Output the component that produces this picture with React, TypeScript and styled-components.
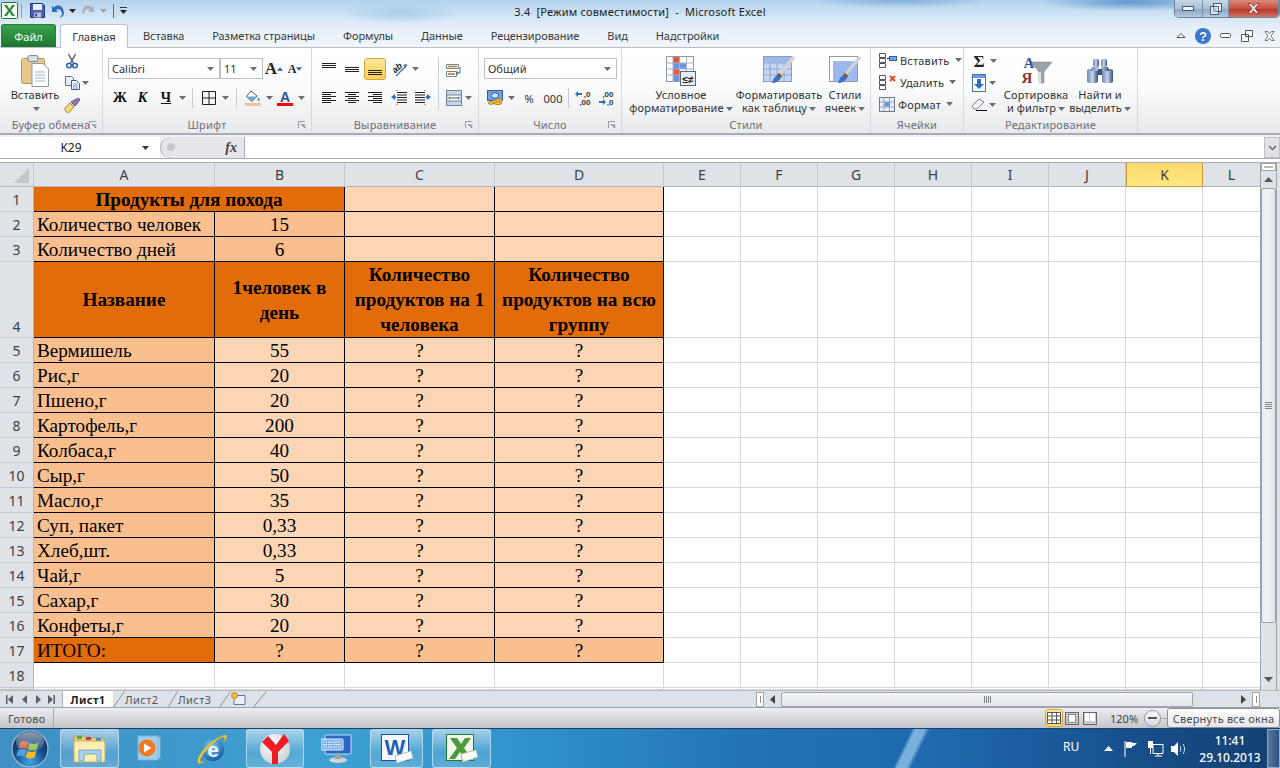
import React from "react";
import styled, { createGlobalStyle } from "styled-components";

const Global = createGlobalStyle`
  html, body { margin: 0; padding: 0; background: #fff; }
  #root { width: 1280px; height: 768px; overflow: hidden; }
  * { box-sizing: border-box; }
  svg { display: block; flex: none; }
`;

const UI = `"Noto Sans", "DejaVu Sans", sans-serif`;

const Screen = styled.div`
  width: 1280px; height: 768px; display: flex; flex-direction: column; overflow: hidden;
  font-family: ${UI}; font-size: 11px; color: #3b3b3b;
`;

const Chrome = styled.div`
  height: 47px; display: flex; flex-direction: column;
  background:
    radial-gradient(ellipse 60px 12px at 400px 12px, #a9cdea 0, transparent 100%),
    radial-gradient(ellipse 90px 9px at 1130px 2px, #5f98d0 0, transparent 100%),
    radial-gradient(ellipse 90px 8px at 900px 0, #7fb0dc 0, transparent 100%),
    linear-gradient(#b2d2ec 0, #cfe2f3 14px, #e6f0f9 28px, #f1f5fa 47px);
`;
const TitleBar = styled.div`
  height: 24px; display: grid; grid-template-columns: 1fr auto 1fr; align-items: start;
`;
const Qat = styled.div`display: flex; align-items: center; height: 21px; padding-left: 1px; gap: 0;`;
const Slot = styled.div<{ $w: number }>`
  width: ${p => p.$w}px; flex: none; display: flex; align-items: center; justify-content: center;
`;
const VRule = styled.div<{ $h: number; $c?: string; $mx?: number }>`
  width: 1px; height: ${p => p.$h}px; background: ${p => p.$c ?? "#c7ccd3"}; margin: 0 ${p => p.$mx ?? 0}px; flex: none;
`;
const TitleText = styled.div`
  font-size: 11px; line-height: 24px; color: #1e1e1e; white-space: pre; letter-spacing: .2px;
`;
const WinGroup = styled.div`display: flex; justify-content: flex-end;`;
const WinBtns = styled.div`
  width: 106px; height: 18px; display: flex; border: 1px solid #6f8296; border-top: none;
  border-radius: 0 0 5px 5px; overflow: hidden;
`;
const WinBtn = styled.div<{ $w: number; $close?: boolean }>`
  width: ${p => p.$w}px; display: flex; align-items: center; justify-content: center;
  border-right: 1px solid #7f93a8;
  background: ${p => p.$close ? "linear-gradient(#d98a7e,#c8503f 50%,#b8352a 55%,#d2756a)" : "linear-gradient(#c6d7e8,#a9c0d6 50%,#8da9c4 55%,#b3c9dc)"};
`;
const TabRow = styled.div`height: 23px; display: flex; align-items: stretch;`;
const FileTab = styled.div`
  width: 55px; margin-left: 1px; color: #fff; font-size: 11px; display: flex; align-items: center; justify-content: center;
  background: linear-gradient(#3aa24b,#2a8c3d 50%,#1e7430); border-radius: 3px 3px 0 0; border: 1px solid #2b7a3a; border-bottom: none;
`;
const ActiveTab = styled.div`
  width: 68px; margin-left: 4px; margin-right: 1px; height: 24px; display: flex; align-items: center; justify-content: center; font-size: 11px; color: #333;
  background: linear-gradient(#fff,#fbfcfd); border: 1px solid #bcc0c6; border-bottom: none; border-radius: 3px 3px 0 0; z-index: 1;
`;
const Tab = styled.div`
  padding: 0 14px; font-size: 11px; display: flex; align-items: center; color: #3a3a3a; white-space: nowrap; letter-spacing: -.07px;
`;
const TabRight = styled.div`margin-left: auto; display: flex; align-items: center;`;

const Ribbon = styled.div`
  height: 88px; display: flex; border-top: 1px solid #bcc0c6; border-bottom: 2px solid #a9adb3;
  background: linear-gradient(#fff 0, #fbfcfc 45%, #f1f2f4 72%, #e8eaed 100%);
`;
const Group = styled.div<{ $w: number }>`
  width: ${p => p.$w}px; flex: none; display: flex; flex-direction: column; position: relative;
  border-right: 1px solid #d6d9dd;
`;
const GroupBody = styled.div`flex: 1; display: flex; min-height: 0;`;
const GroupLabel = styled.div`
  height: 16px; line-height: 15px; text-align: center; color: #6d7076; font-size: 11px; flex: none; letter-spacing: .2px;
`;
const Launcher = styled.div`position: absolute; right: 5px; bottom: 4px;`;
const Col = styled.div<{ $pl?: number; $pt?: number; $gap?: number; $w?: number }>`
  display: flex; flex-direction: column; padding-left: ${p => p.$pl ?? 0}px; padding-top: ${p => p.$pt ?? 0}px; gap: ${p => p.$gap ?? 0}px;
  ${p => p.$w ? `width:${p.$w}px;flex:none;` : ""}
`;
const Row = styled.div<{ $h?: number }>`
  display: flex; align-items: center; ${p => p.$h ? `height:${p.$h}px;` : ""}
`;
const ComboBox = styled.div<{ $w: number }>`
  width: ${p => p.$w}px; height: 21px; border: 1px solid #bcc1c8; background: #fff; display: flex; align-items: center;
  justify-content: space-between; padding: 0 5px 0 3px; font-size: 11px; color: #333; flex: none;
`;
const BigBtn = styled.div<{ $w: number; $ml?: number }>`
  width: ${p => p.$w}px; margin-left: ${p => p.$ml ?? 0}px; flex: none; display: flex; flex-direction: column; align-items: center; padding-top: 6px;
`;
const BigIcon = styled.div`height: 34px; display: flex; align-items: center; justify-content: center;`;
const BigText = styled.div`
  font-size: 11px; line-height: 13px; text-align: center; color: #333; white-space: nowrap; letter-spacing: .1px;
`;
const GlyphBtn = styled.span`
  font-family: "Liberation Serif", serif; font-weight: 700; font-size: 14px; color: #111; line-height: 1;
`;
const Underlined = styled(GlyphBtn)`text-decoration: underline;`;
const ItalicGlyph = styled(GlyphBtn)`font-style: italic;`;
const GrowA = styled.span<{ $s: number }>`
  font-family: "Liberation Serif", serif; font-weight: 700; font-size: ${p => p.$s}px; color: #222; line-height: 1;
`;
const Selected = styled.div`
  width: 22px; height: 22px; display: flex; align-items: center; justify-content: center;
  border: 1px solid #d4a63f; border-radius: 3px; background: linear-gradient(#fde9a0,#fbd96c 55%,#fdd05a);
`;
const NumText = styled.span`font-size: 11px; color: #333;`;
const SmallCmd = styled.div`
  height: 22px; display: flex; align-items: center; font-size: 11px; color: #333; white-space: nowrap; letter-spacing: .2px;
`;
const CmdText = styled.span`margin: 0 5px 0 3px;`;

const FormulaRow = styled.div`
  height: 24px; display: flex; background: #eef0f3; padding-top: 2px; border-bottom: 1px solid #a9adb3;
`;
const NameBox = styled.div`
  width: 160px; flex: none; background: #fff; display: flex; align-items: center; font-size: 12px; color: #222; position: relative;
`;
const NameLabel = styled.span`width: 142px; text-align: center;`;
const FxPanel = styled.div`
  width: 85px; flex: none; background: #e4e6e9; display: flex; align-items: center; justify-content: flex-end; padding-right: 7px;
  border-right: 1px solid #a9adb3; border-left: 1px solid #a9adb3; border-radius: 12px 0 0 12px; position: relative;
`;
const FxDot = styled.div`
  position: absolute; left: 6px; top: 6px; width: 8px; height: 8px; border-radius: 50%; background: #c4c7cb;
`;
const FxText = styled.span`font-family: "Liberation Serif", serif; font-style: italic; font-weight: 700; font-size: 14px; color: #444;`;
const FormulaInput = styled.div`flex: 1; background: #fff;`;
const FormulaDrop = styled.div`
  width: 16px; flex: none; background: #e1e3e6; border: 1px solid #bcc0c5; display: flex; align-items: center; justify-content: center;
`;
const Gutter = styled.div`height: 4px; background: #fff; border-bottom: 1px solid #a9adb3; flex: none;`;

const SheetWrap = styled.div`height: 527px; display: flex; flex: none; background: #dfe3e8;`;

const COLS = [34, 181, 130, 150, 169, 77, 77, 77, 77, 77, 77, 77, 58];
const ROWS = [24, 25, 25, 25, 76, ...Array(14).fill(25), 2];

const SheetGrid = styled.div`
  width: 1260px; flex: none; height: 527px; overflow: hidden; display: grid; background: #fff;
  grid-template-columns: ${COLS.map(c => c + "px").join(" ")};
  grid-template-rows: ${ROWS.map(c => c + "px").join(" ")};
`;
const Corner = styled.div`
  background: #dfe3e8; border-right: 1px solid #c5c9cf; border-bottom: 1px solid #b4b8be; display: flex; align-items: flex-end; justify-content: flex-end; padding: 0 4px 3px 0;
`;
const ColHead = styled.div<{ $on?: boolean }>`
  background: ${p => p.$on ? "linear-gradient(#fdd96d,#fee97f)" : "#dfe3e8"};
  border-right: 1px solid ${p => p.$on ? "#c99a3a" : "#c5c9cf"};
  border-left: ${p => p.$on ? "1px solid #c99a3a" : "none"};
  border-bottom: 1px solid ${p => p.$on ? "#c99a3a" : "#b4b8be"};
  display: flex; align-items: center; justify-content: center; font-size: 14px; color: #3d4043;
`;
const RowHead = styled.div<{ $tall?: boolean }>`
  background: #dfe3e8; border-right: 1px solid #b4b8be; border-bottom: 1px solid #c5c9cf;
  display: flex; align-items: ${p => p.$tall ? "flex-end" : "center"}; justify-content: center; font-size: 14px; color: #3d4043;
  padding-bottom: ${p => p.$tall ? "1px" : "0"};
`;
const Cell = styled.div<{ $bg?: string; $center?: boolean; $bold?: boolean; $span?: number; $blank?: boolean }>`
  background: ${p => p.$bg ?? "#fff"};
  ${p => p.$span ? `grid-column: span ${p.$span};` : ""}
  border-right: 1px solid ${p => p.$blank ? "#d9d9d9" : "#000"};
  border-bottom: 1px solid ${p => p.$blank ? "#d9d9d9" : "#000"};
  font-family: "Liberation Serif", serif; font-size: 19.2px; color: #000; line-height: 25px;
  font-weight: ${p => p.$bold ? 700 : 400};
  text-align: ${p => p.$center ? "center" : "left"};
  padding-left: ${p => p.$center ? 0 : 3}px;
  white-space: nowrap; overflow: hidden;
`;
const HeadCell = styled(Cell)`display: flex; align-items: center; justify-content: center;`;

const VScroll = styled.div`
  width: 17px; flex: none; background: #dfe3e8; border-left: 1px solid #9ea3a9; border-right: 1px solid #9ea3a9; display: flex; flex-direction: column; align-items: center;
`;
const SplitV = styled.div`
  width: 15px; height: 8px; background: #fff; border: 1px solid #9ea3a9; display: flex; align-items: center; justify-content: center;
`;
const Arrow = styled.div<{ $h: number }>`
  height: ${p => p.$h}px; width: 100%; display: flex; align-items: center; justify-content: center; flex: none;
`;
const VThumb = styled.div`
  width: 15px; height: 435px; flex: none; border: 1px solid #9ea3a9; border-radius: 2px;
  background: linear-gradient(90deg,#e8ebf0,#f0f2f5 50%,#dfe2e8); display: flex; align-items: center; justify-content: center;
`;
const Grip = styled.div<{ $v?: boolean }>`
  width: 7px; height: 7px;
  background: ${p => p.$v
    ? "repeating-linear-gradient(#7f8388 0 1px,transparent 1px 2px)"
    : "repeating-linear-gradient(90deg,#7f8388 0 1px,transparent 1px 2px)"};
`;
const Flex1 = styled.div`flex: 1;`;

const TabsBar = styled.div`
  height: 17px; flex: none; display: flex; align-items: center; background: #dde1e8; border-top: 1px solid #b5b9c0;
`;
const SheetTabs = styled.div`width: 756px; flex: none; display: flex; align-items: center; height: 100%;`;
const SheetTab = styled.div<{ $on?: boolean; $w: number }>`
  width: ${p => p.$w}px; height: 16px; flex: none; display: flex; align-items: center; justify-content: ${p => p.$on ? "center" : "flex-start"};
  font-size: 11px; color: ${p => p.$on ? "#222" : "#555"}; font-weight: ${p => p.$on ? 700 : 400}; letter-spacing: .4px;
  background: ${p => p.$on ? "#fff" : "transparent"};
`;
const NavGap = styled.div`width: 3px; flex: none;`;
const SplitH = styled.div`
  width: 8px; height: 15px; background: #fff; border: 1px solid #9ea3a9; display: flex; align-items: center; justify-content: center; flex: none;
`;
const HBar = styled.div`width: 1px; height: 7px; background: #8d9197;`;
const HThumb = styled.div`
  width: 412px; height: 15px; flex: none; border: 1px solid #a4a8ae; border-radius: 2px;
  background: linear-gradient(#f2f4f7,#e3e6ec); display: flex; align-items: center; justify-content: center;
`;
const StatusBar = styled.div`
  height: 21px; flex: none; display: flex; align-items: center; border-top: 1px solid #9ea3a9;
  background: linear-gradient(#eceef1,#d8dade 50%,#c2c5ca);
`;
const Ready = styled.div`
  width: 54px; height: 100%; display: flex; align-items: center; padding-left: 8px; font-size: 11px; color: #4a4a4a; border-right: 1px solid #a8acb1; letter-spacing: .3px;
`;
const ViewBtn = styled.div<{ $on?: boolean }>`
  width: 18px; height: 18px; flex: none; display: flex; align-items: center; justify-content: center;
  ${p => p.$on ? "border:1px solid #d4a63f;border-radius:3px;background:linear-gradient(#fdeaa5,#fbd665);" : ""}
`;
const Zoom = styled.span`font-size: 11px; color: #444; width: 34px; text-align: left; margin-left: 11px; flex: none;`;
const ZoomMinus = styled.div`
  width: 17px; height: 17px; border-radius: 50%; flex: none; border: 1px solid #8f9399;
  background: linear-gradient(#fbfbfc,#d5d7da); display: flex; align-items: center; justify-content: center;
`;
const MinusBar = styled.div`width: 9px; height: 2px; background: #555;`;
const TipLine = styled.div`width: 6px; height: 1px; background: #aaa; flex: none;`;
const Tooltip = styled.div`
  width: 113px; height: 20px; flex: none; border: 1px solid #8b8f94; border-radius: 3px;
  background: linear-gradient(#fff,#e4e5ee); font-size: 11px; color: #4a4a4a; display: flex; align-items: center; justify-content: center; white-space: nowrap; letter-spacing: .2px;
`;

const Taskbar = styled.div`
  height: 40px; flex: none; display: flex; align-items: center; color: #fff; border-top: 1px solid #19406a;
  background:
    linear-gradient(116deg, transparent 0 70.2%, rgba(170,215,245,.65) 70.5% 71.2%, transparent 71.6%),
    linear-gradient(90deg,#3f8fc4 0,#3ea0d2 25%,#3194cb 40%,#2273b8 58%,#1e68ae 74%,#17508c 88%,#143f70 100%);
`;
const Orb = styled.div`width: 60px; height: 100%; flex: none; display: flex; align-items: center; justify-content: center;`;
const TaskBtn = styled.div<{ $w: number; $ml?: number; $open?: boolean }>`
  width: ${p => p.$w}px; height: 39px; margin-left: ${p => p.$ml ?? 0}px; flex: none; display: flex; align-items: center; justify-content: center;
  ${p => p.$open ? "border:1px solid rgba(190,225,245,.8);border-radius:3px;background:linear-gradient(rgba(255,255,255,.55),rgba(255,255,255,.12) 60%,rgba(255,255,255,.2));" : ""}
`;
const Tray = styled.div`margin-left: auto; display: flex; align-items: center; height: 100%;`;
const Lang = styled.span`font-size: 12px; width: 35px; margin-top: -4px;`;
const Clock = styled.div`
  width: 64px; text-align: center; font-size: 12px; line-height: 17px; margin-left: 8px; white-space: nowrap; font-weight: 500;
`;
const ShowDesk = styled.div`
  width: 13px; height: 100%; flex: none; margin-left: 5px; border: 1px solid rgba(170,200,230,.7); background: linear-gradient(90deg,rgba(255,255,255,.3),rgba(255,255,255,.1));
`;

/* ---- icons ---- */
const Caret = ({ c = "#6b6e73" }: { c?: string }) => (
  <svg width="7" height="4" viewBox="0 0 7 4"><path d="M0 0h7L3.5 4z" fill={c} /></svg>
);
const Launch = () => (
  <svg width="8" height="8" viewBox="0 0 8 8"><path d="M.5 7V.5H7" fill="none" stroke="#9a9da2" /><path d="M3 3h4.500v4.500z" fill="#b5b8bc" /><path d="M3 3l4 4" stroke="#777" /></svg>
);
const ExcelLogo = ({ s = 17 }: { s?: number }) => (
  <svg width={s} height={s} viewBox="0 0 17 17">
    <rect x=".5" y=".5" width="16" height="16" rx="1" fill="#f4f9f2" stroke="#1f7a3a" />
    <path d="M3 3h3l2.500 4L11 3h3l-4 5.500 4 5.500h-3l-2.500-4L6 14H3l4-5.500z" fill="#2f8a3d" />
  </svg>
);
const Save = () => (
  <svg width="15" height="15" viewBox="0 0 15 15">
    <path d="M.5.5h12l2 2v12H.5z" fill="#4a62b5" stroke="#27357e" />
    <rect x="3" y="1" width="9" height="6" fill="#e8edf8" />
    <rect x="4" y="9.500" width="7" height="5" fill="#b9c4e2" /><rect x="5" y="10.500" width="2" height="3" fill="#3a4e9a" />
  </svg>
);
const Undo = ({ c = "#2d6fb8" }: { c?: string }) => (
  <svg width="15" height="14" viewBox="0 0 15 14">
    <path d="M2 2v6h6L6 6c3-2 5.500-.5 6 4l2-1C13.500 2 8-1 4 3.500z" fill={c} />
    <path d="M12 10c-.5 1.500-1.500 3-3 3.500 3 0 5-2 5-4.500z" fill={c} />
  </svg>
);
const Redo = () => <svg width="15" height="14" viewBox="0 0 15 14"><g transform="translate(15 0) scale(-1 1)"><path d="M2 2v6h6L6 6c3-2 5.500-.5 6 4l2-1C13.500 2 8-1 4 3.500z" fill="#a9b3bc" /></g></svg>;
const Custom = () => (
  <svg width="9" height="8" viewBox="0 0 9 8"><path d="M1 .5h7" stroke="#333" /><path d="M1 3h7L4.500 7z" fill="#222" /></svg>
);
const Paste = () => (
  <svg width="28" height="32" viewBox="0 0 28 32">
    <rect x=".5" y="3.500" width="23" height="25" rx="2" fill="#e8c78c" stroke="#b4935a" />
    <rect x="7" y=".5" width="10" height="6" rx="1.500" fill="#d8dce4" stroke="#7d8899" />
    <path d="M11 8.500h11l5.500 5.500v17.500H11z" fill="#fff" stroke="#8f9aa8" />
    <path d="M14 17h10M14 20h10M14 23h10M14 26h10" stroke="#a7b4c6" />
  </svg>
);
const Scissors = () => (
  <svg width="12" height="15" viewBox="0 0 12 15">
    <path d="M2.500 0l5 9M9.500 0l-5 9" stroke="#555" strokeWidth="1.300" />
    <circle cx="3" cy="11.500" r="2.300" fill="none" stroke="#2f63b0" strokeWidth="1.600" />
    <circle cx="9" cy="11.500" r="2.300" fill="none" stroke="#2f63b0" strokeWidth="1.600" />
  </svg>
);
const Copy = () => (
  <svg width="15" height="14" viewBox="0 0 15 14">
    <path d="M.5.500h6l2 2v7h-8z" fill="#eaf1fb" stroke="#5278a8" />
    <path d="M6.500 4.500h5l3 3v6h-8z" fill="#fff" stroke="#2f63a8" />
    <path d="M8 8h5M8 10h5M8 12h5" stroke="#6c93c8" />
  </svg>
);
const Brush = () => (
  <svg width="16" height="15" viewBox="0 0 16 15">
    <path d="M1 10l5-5 4 4-5 5.500C3 15 .5 13 1 10z" fill="#f0d878" stroke="#a58a3a" />
    <path d="M7 4l4 4 4.500-5.500c.8-1.500-.8-2.800-2-2z" fill="#8a7cb0" stroke="#5b4f80" />
  </svg>
);
const Borders = () => (
  <svg width="14" height="14" viewBox="0 0 14 14"><path d="M.5.500h13v13H.5zM7 .5v13M.5 7h13" fill="none" stroke="#222" /></svg>
);
const Fill = () => (
  <svg width="16" height="16" viewBox="0 0 16 16">
    <path d="M6 1l6 5-5 5.500-5.500-5z" fill="#fff" stroke="#555" />
    <path d="M13 7c1.500 2 2 3 1.200 3.800-1 .7-2-.5-1.200-3.800z" fill="#3a7bc8" />
    <path d="M2 6.500h9l-4 5z" fill="#6aa7e0" />
    <rect x="0" y="13" width="16" height="3" fill="#fbc08e" />
  </svg>
);
const FontColor = () => (
  <svg width="16" height="16" viewBox="0 0 16 16">
    <text x="8" y="11.500" textAnchor="middle" fontFamily="Liberation Sans" fontWeight="700" fontSize="14" fill="#2c4f96">A</text>
    <rect x="0" y="13" width="16" height="3" fill="#f00" />
  </svg>
);
const Lines = ({ rows, w = 14 }: { rows: [number, number, number?][]; w?: number }) => (
  <svg width={w} height="14" viewBox={`0 0 ${w} 14`}>
    {rows.map(([y, x1, x2], i) => <path key={i} d={`M${x1} ${y + 0.5}H${x2 ?? w}`} stroke="#222" />)}
  </svg>
);
const VA = (o: number) => <Lines rows={[[o, 0], [o + 2, 0], [o + 4, 0]]} />;
const HL: [number, number, number][] = [[1, 0, 14], [3, 0, 9], [5, 0, 14], [7, 0, 9], [9, 0, 14], [11, 0, 9]];
const HC: [number, number, number][] = [[1, 0, 14], [3, 3, 11], [5, 0, 14], [7, 3, 11], [9, 0, 14], [11, 3, 11]];
const HR: [number, number, number][] = [[1, 0, 14], [3, 5, 14], [5, 0, 14], [7, 5, 14], [9, 0, 14], [11, 5, 14]];
const Orient = () => (
  <svg width="18" height="15" viewBox="0 0 18 15">
    <text x="3" y="10" fontFamily="Liberation Sans" fontSize="9" fontStyle="italic" fontWeight="700" fill="#222" transform="rotate(-40 6 8)">ab</text>
    <path d="M6 14L16 4" stroke="#3a6fb5" strokeWidth="1.300" /><path d="M17 2l-4 1 3 3z" fill="#3a6fb5" />
  </svg>
);
const Indent = ({ flip }: { flip?: boolean }) => (
  <svg width="16" height="16" viewBox="0 0 16 16">
    <g transform={flip ? "translate(16 0) scale(-1 1)" : undefined}>
      <path d="M6 2.500h10M6 5h10M6 7.500h10M6 10h10M6 12.500h10" stroke="#222" />
      <path d="M0 7l4-3v2h1v2H4v2z" fill="#2f6fc0" />
      <path d="M6 0v2M6 14v2" stroke="#555" strokeDasharray="1 1" />
    </g>
  </svg>
);
const Wrap = () => (
  <svg width="16" height="15" viewBox="0 0 16 15">
    <path d="M.5 1.500h12v4H.5zM.5 8.500h10v5H.5z" fill="#fff" stroke="#788" />
    <path d="M2 3.500h9M2 11h7" stroke="#b3733a" strokeWidth="1.500" />
    <path d="M14 4v6h-2" fill="none" stroke="#3a70b8" /><path d="M12 8l-2 2 2 2z" fill="#3a70b8" />
  </svg>
);
const Merge = () => (
  <svg width="16" height="16" viewBox="0 0 16 16">
    <rect x=".5" y=".5" width="15" height="15" fill="#c5d5ec" stroke="#72829a" />
    <rect x="2" y="5" width="12" height="6" fill="#fff" />
    <path d="M4 8h8" stroke="#555" /><path d="M2 8l2-1.500v3zM14 8l-2-1.500v3z" fill="#2f6fc0" />
    <path d="M.5 5h15M.5 11h15" stroke="#72829a" />
  </svg>
);
const Money = () => (
  <svg width="16" height="16" viewBox="0 0 16 16">
    <rect x=".5" y=".5" width="15" height="10" fill="#6fa0da" stroke="#2c5ea3" />
    <ellipse cx="8" cy="5.500" rx="3.500" ry="2.800" fill="#d5e4f6" stroke="#2c5ea3" />
    <ellipse cx="11" cy="10.500" rx="4" ry="1.500" fill="#f4c23e" stroke="#b88615" />
    <ellipse cx="11" cy="13" rx="4" ry="1.500" fill="#f4c23e" stroke="#b88615" />
    <ellipse cx="4" cy="13" rx="3" ry="1.300" fill="#f4c23e" stroke="#b88615" />
  </svg>
);
const DecInc = ({ top, bot, down }: { top: string; bot: string; down?: boolean }) => (
  <svg width="16" height="16" viewBox="0 0 16 16">
    <text x="15.500" y="7" textAnchor="end" fontFamily="Liberation Sans" fontWeight="700" fontSize="8" fill="#333">{top}</text>
    <text x="15.500" y="15" textAnchor="end" fontFamily="Liberation Sans" fontWeight="700" fontSize="8" fill="#333">{bot}</text>
    {down
      ? <path d="M8 12l-3-3v2H1v2h4v2z" fill="#2f6fc0" />
      : <path d="M0 4l3-3v2h4v2H3v2z" fill="#2f6fc0" />}
  </svg>
);
const CondFormat = () => (
  <svg width="30" height="30" viewBox="0 0 30 30">
    <rect x=".5" y=".5" width="27" height="25" fill="#fff" stroke="#8e9bab" />
    <rect x="7" y="1" width="6.500" height="24" fill="#6a94dc" />
    <rect x="7" y="1" width="6.500" height="6" fill="#e8553d" /><rect x="7" y="13" width="6.500" height="6" fill="#e8553d" />
    <rect x="13.500" y="7" width="7" height="6" fill="#6a94dc" />
    <path d="M7 1v25M13.500 1v25M20.500 1v25M1 7h27M1 13h27M1 19h27" stroke="#a7b4c4" />
    <rect x="14.500" y="15.500" width="15" height="14" fill="#e8eef6" stroke="#596a80" />
    <text x="22" y="27" textAnchor="middle" fontFamily="Liberation Sans" fontSize="10" fontWeight="700" fill="#222">≤≠</text>
  </svg>
);
const TableFmt = ({ solid }: { solid?: boolean }) => (
  <svg width="32" height="30" viewBox="0 0 32 30">
    <rect x=".5" y=".5" width="28" height="25" fill={solid ? "#fff" : "#c6d7f3"} stroke="#8e9bab" />
    {solid
      ? <rect x="4" y="5" width="24" height="20" fill="#9cb8ec" />
      : <path d="M7 1v25M14 1v25M21 1v25M1 7h27M1 13h27M1 19h27" stroke="#8fa6cc" />}
    {!solid && <rect x="1" y="1" width="27" height="6" fill="#9cb8ec" />}
    <path d="M31 1L16 19" stroke="#d2d4d8" strokeWidth="3.500" />
    <path d="M16 17l-5 5c-1 2-1 3-2 5 4 0 7-2 9-5l1-2z" fill="#3a6fcc" />
    <path d="M16 17l3 3-2 2-3-3z" fill="#8a5a22" />
  </svg>
);
const InsertRows = ({ red }: { red?: boolean }) => (
  <svg width="18" height="15" viewBox="0 0 18 15">
    <path d="M.5.500h6v4h-6zM.5 5.500h6v4h-6zM.5 10.500h6v4h-6z" fill="#fff" stroke="#556" />
    {red
      ? <path d="M11 1l5 5M16 1l-5 5" stroke="#e04a28" strokeWidth="2" />
      : <><path d="M8 5.500h2" stroke="#222" /><rect x="10.500" y="3.500" width="7" height="4" fill="#6aa3e0" stroke="#2f63a8" /></>}
  </svg>
);
const FormatCells = () => (
  <svg width="16" height="16" viewBox="0 0 16 16">
    <rect x=".5" y="1.500" width="15" height="14" fill="#eaf0f9" stroke="#6a7a90" />
    <path d="M5 1v14M10.500 1v14M1 6h14M1 11h14" stroke="#8fa2bc" />
    <rect x="5.500" y="6.500" width="5" height="4" fill="#5f92dd" />
  </svg>
);
const Sigma = () => <GrowA $s={17}>Σ</GrowA>;
const FillDown = () => (
  <svg width="14" height="18" viewBox="0 0 14 18">
    <rect x=".5" y=".5" width="13" height="17" fill="#fff" stroke="#4672ae" />
    <path d="M1 1h12v3H1z" fill="#6f9bd8" />
    <path d="M5 5h4v5h3l-5 5-5-5h3z" fill="#2f6fc0" />
  </svg>
);
const Eraser = () => (
  <svg width="16" height="14" viewBox="0 0 16 14">
    <path d="M1 8l7-7 5 3-7 7H3z" fill="#eef1f6" stroke="#7a8696" />
    <path d="M5 12.500h11" stroke="#111" />
  </svg>
);
const SortIcon = () => (
  <svg width="34" height="30" viewBox="0 0 34 30">
    <path d="M12 6h21l-8 10v11h-5V16z" fill="#9aa1a9" stroke="#80878f" strokeWidth=".5" />
    <path d="M20 16h2v11h-2z" fill="#dde0e3" />
    <text x="10" y="12" textAnchor="middle" fontFamily="Liberation Serif" fontWeight="700" fontSize="15" fill="#2b5aa8">A</text>
    <text x="8" y="27" textAnchor="middle" fontFamily="Liberation Serif" fontWeight="700" fontSize="15" fill="#8a3030">Я</text>
  </svg>
);
const Binoculars = () => (
  <svg width="28" height="26" viewBox="0 0 28 26">
    <defs><linearGradient id="bn" x1="0" x2="1"><stop offset="0" stopColor="#6d88b8" /><stop offset=".5" stopColor="#c6d2e8" /><stop offset="1" stopColor="#36507f" /></linearGradient></defs>
    <rect x="7" y="1" width="6" height="8" rx="2" fill="url(#bn)" /><rect x="15" y="1" width="6" height="8" rx="2" fill="url(#bn)" />
    <rect x="1" y="11" width="11" height="14" rx="2" fill="url(#bn)" /><rect x="16" y="11" width="11" height="14" rx="2" fill="url(#bn)" />
    <path d="M6 9h7v4H4zM15 9h7l2 4h-9z" fill="url(#bn)" /><rect x="12" y="11" width="4" height="6" fill="#3e5480" />
  </svg>
);
const ArrowTri = ({ d, c = "#555", s = 8 }: { d: "u" | "d" | "l" | "r"; c?: string; s?: number }) => {
  const p = { u: "M0 7L4.500 2 9 7z", d: "M0 2h9L4.500 7z", l: "M7 0v9L2 4.500z", r: "M2 0v9l5-4.500z" }[d];
  return <svg width={s + 1} height={s + 1} viewBox="0 0 9 9"><path d={p} fill={c} /></svg>;
};
const First = ({ flip }: { flip?: boolean }) => (
  <svg width="8" height="9" viewBox="0 0 8 9"><g transform={flip ? "translate(8 0) scale(-1 1)" : undefined}><path d="M1 0h1.500v9H1zM8 0v9L3 4.500z" fill="#5b5f66" /></g></svg>
);
const Slash = ({ w = 12 }: { w?: number }) => <svg width={w} height="16" viewBox={`0 0 ${w} 16`}><path d={`M.5 16L${w - 0.5} .5`} stroke="#8d9198" fill="none" /></svg>;
const NewSheet = () => (
  <svg width="15" height="14" viewBox="0 0 15 14">
    <path d="M3 3.500h11v9H3z" fill="#eaf0f8" stroke="#657992" />
    <circle cx="3.500" cy="3.500" r="3" fill="#f0b93a" stroke="#c98d1e" />
  </svg>
);
const WinMin = () => <svg width="12" height="5" viewBox="0 0 12 5"><rect x=".5" y=".5" width="11" height="4" fill="#eef3f8" stroke="#49586a" /></svg>;
const WinMax = () => <svg width="12" height="12" viewBox="0 0 12 12"><path d="M3.500.5h8v8h-8z M.5 3.500h8v8h-8z" fill="#e9f0f7" stroke="#49586a" /><rect x="2.500" y="5.500" width="4" height="4" fill="#9cb6cf" /></svg>;
const WinX = () => <svg width="13" height="11" viewBox="0 0 13 11"><path d="M1 .5h3L6.500 3.500 9 .5h3L8 5.500l4 5H9L6.500 7.500 4 10.500H1l4-5z" fill="#f6eeee" stroke="#7a2a22" strokeWidth=".7" /></svg>;
const Help = () => (
  <svg width="16" height="16" viewBox="0 0 16 16"><circle cx="8" cy="8" r="8" fill="#3c78cc" /><text x="8" y="12.500" textAnchor="middle" fontFamily="Liberation Sans" fontWeight="700" fontSize="12.500" fill="#fff">?</text></svg>
);
const Chev = () => <svg width="10" height="7" viewBox="0 0 10 7"><path d="M1 5.500L5 1.500l4 4H1z" fill="#fff" stroke="#555" /></svg>;
const MiniMin = () => <svg width="11" height="5" viewBox="0 0 11 5"><rect x=".5" y=".5" width="10" height="4" rx="1" fill="#fff" stroke="#555" /></svg>;
const MiniMax = () => <svg width="12" height="12" viewBox="0 0 12 12"><path d="M4.500.5h7v6h-7zM.5 4.500h7v7h-7z" fill="#fff" stroke="#555" /></svg>;
const MiniX = () => <svg width="11" height="10" viewBox="0 0 11 10"><path d="M1 .5h2.500L5.500 3l2-2.500H10L7 5l3 4.500H7.500L5.500 7l-2 2.500H1L4 5z" fill="#fff" stroke="#555" strokeWidth=".8" /></svg>;
const Normal = () => <svg width="14" height="12" viewBox="0 0 14 12"><path d="M.5.5h13v11H.5zM5 .5v11M9.500 .5v11M.5 4h13M.5 8h13" fill="#fff" stroke="#555" /></svg>;
const PageV = () => <svg width="14" height="13" viewBox="0 0 14 13"><rect x=".5" y=".5" width="13" height="12" fill="#c7c9cc" stroke="#666" /><rect x="3.500" y="2.500" width="7" height="8" fill="#fff" stroke="#888" /></svg>;
const BreakV = () => <svg width="14" height="13" viewBox="0 0 14 13"><rect x=".5" y=".5" width="13" height="12" fill="#c7c9cc" stroke="#666" /><rect x="2" y="1" width="4" height="8" fill="#fff" /><rect x="7" y="1" width="5" height="8" fill="#fff" /></svg>;

const WinOrb = () => (
  <svg width="38" height="38" viewBox="0 0 38 38">
    <defs>
      <radialGradient id="orb" cx=".5" cy=".85" r=".8"><stop offset="0" stopColor="#3aa7e8" /><stop offset=".55" stopColor="#144c88" /><stop offset="1" stopColor="#0d2c52" /></radialGradient>
      <linearGradient id="orbg" x1="0" y1="0" x2="0" y2="1"><stop offset="0" stopColor="#fff" stopOpacity=".55" /><stop offset="1" stopColor="#fff" stopOpacity=".05" /></linearGradient>
    </defs>
    <circle cx="19" cy="19" r="18" fill="url(#orb)" stroke="#9fb9d2" strokeWidth="1.200" />
    <path d="M9 12c3-1.500 6-1 8.500.5l-1.800 6.500c-3-1.500-5-1.500-8.200-.5z" fill="#e2542f" />
    <path d="M18.500 13c3 1.500 5.500 1.500 9-.5l-1.800 7c-3 1.500-6 1.500-9-.5z" fill="#8ebb3c" />
    <path d="M7 20c3-1 6-1 8.500.5l-1.800 6.500c-3-1.500-5.500-1.500-8.500-.5z" fill="#4e9fdc" />
    <path d="M16.500 21c3 1.500 6 1.500 9-.5l-1.800 7c-3 1.500-6 1.500-9-.5z" fill="#f4bb2a" />
    <ellipse cx="19" cy="12" rx="14" ry="10" fill="url(#orbg)" />
  </svg>
);
const Folder = () => (
  <svg width="33" height="28" viewBox="0 0 33 28">
    <path d="M1 3c0-1 .5-2 2-2h8l2 2h18v22H1z" fill="#e9cf7a" stroke="#b99e53" />
    <rect x="4" y="1" width="5" height="3" fill="#4aae4a" /><rect x="13" y="2" width="5" height="3" fill="#c0433a" /><rect x="23" y="3" width="5" height="3" fill="#3d8ed8" />
    <rect x="1" y="6" width="31" height="21" rx="1" fill="#fdeeb0" stroke="#c7ab62" />
    <path d="M6 15h22v11h-4v-7H11v7H6z" fill="#a9d3ea" stroke="#77aacb" />
  </svg>
);
const Wmp = () => (
  <svg width="30" height="28" viewBox="0 0 30 28">
    <rect x="8" y="2" width="18" height="21" fill="#b5d9f0" stroke="#82b5d6" /><rect x="4" y="1" width="20" height="24" fill="#9fcdea" stroke="#7fb2d4" />
    <circle cx="13" cy="13" r="8.500" fill="#f07b1e" />
    <path d="M10 8.500v9l7.500-4.500z" fill="#fff" />
  </svg>
);
const Ie = () => (
  <svg width="32" height="32" viewBox="0 0 32 32">
    <defs><radialGradient id="ie" cx=".4" cy=".3" r=".8"><stop offset="0" stopColor="#7fd0f5" /><stop offset="1" stopColor="#0c4f96" /></radialGradient></defs>
    <circle cx="17" cy="17" r="11" fill="url(#ie)" />
    <text x="17" y="24" textAnchor="middle" fontFamily="Liberation Sans" fontWeight="700" fontSize="21" fill="#eaf6fd">e</text>
    <path d="M2 30C-1 24 14 6 29 2c3 0 2 4-1 7 1-3 1-5-1-5C18 7 6 21 4 27c0 2 2 2 5 1-3 2-6 3-7 2z" fill="#f0c53a" stroke="#c79a1f" strokeWidth=".4" />
  </svg>
);
const Yandex = () => (
  <svg width="30" height="32" viewBox="0 0 30 32">
    <defs><radialGradient id="ya" cx=".4" cy=".35" r=".75"><stop offset="0" stopColor="#fff" /><stop offset="1" stopColor="#c7ccd0" /></radialGradient></defs>
    <circle cx="15" cy="16" r="15" fill="url(#ya)" />
    <path d="M2 9l6-6 8 9 8-11 5 7-11 11v12h-6V19z" fill="#ee1c25" />
  </svg>
);
const Remote = () => (
  <svg width="32" height="30" viewBox="0 0 32 30">
    <rect x="4" y="1" width="26" height="19" rx="1" fill="#2a66c4" stroke="#c7dcf3" />
    <rect x="0" y="5" width="22" height="11" rx="1" fill="#7fb2ea" stroke="#eaf4ff" />
    <path d="M2 8h18M2 10.500h18M2 13h18" stroke="#fff" strokeDasharray="1.500 1" />
    <ellipse cx="17" cy="26" rx="9" ry="3" fill="#d0d3d6" /><rect x="14" y="20" width="6" height="5" fill="#9ea2a6" />
  </svg>
);
const Word = () => (
  <svg width="32" height="30" viewBox="0 0 32 30">
    <rect x=".5" y=".5" width="27" height="26" fill="#f4f8fd" stroke="#1d4f9a" />
    <text x="14" y="21" textAnchor="middle" fontFamily="Liberation Sans" fontWeight="700" fontSize="22" fill="#1e5fb8">W</text>
    <path d="M14 22l16-5 2 7-16 5z" fill="#fff" stroke="#aebdd3" />
  </svg>
);
const ExcelBig = () => (
  <svg width="32" height="30" viewBox="0 0 32 30">
    <rect x=".5" y=".5" width="27" height="26" fill="#f0f7ea" stroke="#1f7a3a" />
    <path d="M4 4h7l4 6 4-6h6l-7 10 8 11h-7l-5-7-5 7H3l8-11z" fill="#4a9b3a" />
    <path d="M15 20l15-4 2 7-15 5z" fill="#fff" stroke="#9fbf98" />
  </svg>
);
const TrayFlag = () => <svg width="14" height="16" viewBox="0 0 14 16"><path d="M1 0v16" stroke="#fff" /><path d="M2 1h6v1h5l-3 3 3 0H8V7H2z" fill="#fff" /></svg>;
const TrayNet = () => (
  <svg width="16" height="16" viewBox="0 0 16 16"><path d="M5 3.500h10v9H5z" fill="none" stroke="#fff" /><rect x="0" y="0" width="5" height="7" fill="#fff" /><path d="M7 15h7M10 12.500V15M2.500 7v6" stroke="#fff" /></svg>
);
const TraySpeaker = () => (
  <svg width="16" height="14" viewBox="0 0 16 14"><path d="M0 4h3l4-4v14l-4-4H0z" fill="#fff" /><path d="M9 4c1 2 1 4 0 6M12 2c2 3 2 7 0 10" fill="none" stroke="#cfe4f5" /></svg>
);

/* ---- data ---- */
const LIGHT = "#fcd5b4", MID = "#fabf8f", DARK = "#e26b0a";
const LETTERS = ["A", "B", "C", "D", "E", "F", "G", "H", "I", "J", "K", "L"];
const items: [string, string][] = [
  ["Вермишель", "55"], ["Рис,г", "20"], ["Пшено,г", "20"], ["Картофель,г", "200"], ["Колбаса,г", "40"], ["Сыр,г", "50"],
  ["Масло,г", "35"], ["Суп, пакет", "0,33"], ["Хлеб,шт.", "0,33"], ["Чай,г", "5"], ["Сахар,г", "30"], ["Конфеты,г", "20"],
];
const Blanks = ({ n = 8 }: { n?: number }) => <>{Array.from({ length: n }, (_, i) => <Cell key={i} $blank />)}</>;

const Sheet = () => (
  <SheetGrid>
    <Corner><svg width="15" height="15" viewBox="0 0 15 15"><path d="M15 0v15H0z" fill="#c3c7cd" /></svg></Corner>
    {LETTERS.map(l => <ColHead key={l} $on={l === "K"}>{l}</ColHead>)}

    <RowHead>1</RowHead>
    <Cell $bg={DARK} $span={2} $center $bold>Продукты для похода</Cell>
    <Cell $bg={LIGHT} /><Cell $bg={LIGHT} /><Blanks />

    <RowHead>2</RowHead>
    <Cell $bg={MID}>Количество человек</Cell><Cell $bg={MID} $center>15</Cell>
    <Cell $bg={LIGHT} /><Cell $bg={LIGHT} /><Blanks />

    <RowHead>3</RowHead>
    <Cell $bg={MID}>Количество дней</Cell><Cell $bg={MID} $center>6</Cell>
    <Cell $bg={LIGHT} /><Cell $bg={LIGHT} /><Blanks />

    <RowHead $tall>4</RowHead>
    <HeadCell $bg={DARK} $center $bold>Название</HeadCell>
    <HeadCell $bg={DARK} $center $bold><div>1человек в<br />день</div></HeadCell>
    <HeadCell $bg={DARK} $center $bold><div>Количество<br />продуктов на 1<br />человека</div></HeadCell>
    <HeadCell $bg={DARK} $center $bold><div>Количество<br />продуктов на всю<br />группу</div></HeadCell>
    <Blanks />

    {items.map(([n, v], i) => (
      <React.Fragment key={n}>
        <RowHead>{i + 5}</RowHead>
        <Cell $bg={MID}>{n}</Cell>
        <Cell $bg={LIGHT} $center>{v}</Cell>
        <Cell $bg={LIGHT} $center>?</Cell>
        <Cell $bg={LIGHT} $center>?</Cell>
        <Blanks />
      </React.Fragment>
    ))}

    <RowHead>17</RowHead>
    <Cell $bg={DARK}>ИТОГО:</Cell>
    <Cell $bg={MID} $center>?</Cell><Cell $bg={MID} $center>?</Cell><Cell $bg={MID} $center>?</Cell>
    <Blanks />

    <RowHead>18</RowHead><Blanks n={12} />
    <RowHead /><Blanks n={12} />
  </SheetGrid>
);

const InlineCaret = styled.span`display: inline-block; vertical-align: middle; margin-left: 2px;`;

export default function App() {
  return (
    <Screen>
      <Global />
      <Chrome>
        <TitleBar>
          <Qat>
            <ExcelLogo />
            <VRule $h={14} $c="#8fa3b8" $mx={3} />
            <Slot $w={24}><Save /></Slot>
            <Slot $w={16}><Undo /></Slot>
            <Slot $w={14}><Caret c="#222" /></Slot>
            <Slot $w={18}><Redo /></Slot>
            <Slot $w={12}><Caret c="#9aa2aa" /></Slot>
            <VRule $h={14} $c="#5d6d80" $mx={4} />
            <Slot $w={10}><Custom /></Slot>
          </Qat>
          <TitleText>3.4  [Режим совместимости]  -  Microsoft Excel</TitleText>
          <WinGroup>
            <WinBtns>
              <WinBtn $w={28}><WinMin /></WinBtn>
              <WinBtn $w={27}><WinMax /></WinBtn>
              <WinBtn $w={50} $close><WinX /></WinBtn>
            </WinBtns>
          </WinGroup>
        </TitleBar>
        <TabRow>
          <FileTab>Файл</FileTab>
          <ActiveTab>Главная</ActiveTab>
          <Tab>Вставка</Tab><Tab>Разметка страницы</Tab><Tab>Формулы</Tab><Tab>Данные</Tab>
          <Tab>Рецензирование</Tab><Tab>Вид</Tab><Tab>Надстройки</Tab>
          <TabRight>
            <Slot $w={22}><Chev /></Slot>
            <Slot $w={22}><Help /></Slot>
            <Slot $w={22}><MiniMin /></Slot>
            <Slot $w={22}><MiniMax /></Slot>
            <Slot $w={22}><MiniX /></Slot>
          </TabRight>
        </TabRow>
      </Chrome>

      <Ribbon>
        <Group $w={103}>
          <GroupBody>
            <BigBtn $w={60} $ml={5}>
              <BigIcon><Paste /></BigIcon>
              <BigText>Вставить<br /><InlineCaret><Caret /></InlineCaret></BigText>
            </BigBtn>
            <Col $pt={2}>
              <Row $h={22}><Slot $w={14}><Scissors /></Slot></Row>
              <Row $h={22}><Slot $w={14}><Copy /></Slot><Slot $w={12}><Caret /></Slot></Row>
              <Row $h={22}><Slot $w={14}><Brush /></Slot></Row>
            </Col>
          </GroupBody>
          <GroupLabel>Буфер обмена</GroupLabel>
          <Launcher><Launch /></Launcher>
        </Group>

        <Group $w={209}>
          <GroupBody>
            <Col $pl={5} $pt={10} $gap={8}>
              <Row>
                <ComboBox $w={112}>Calibri<Caret /></ComboBox>
                <ComboBox $w={43}>11<Caret /></ComboBox>
                <Slot $w={22}><GrowA $s={17}>A</GrowA><ArrowTri d="u" c="#2c5ea3" s={5} /></Slot>
                <Slot $w={20}><GrowA $s={12}>A</GrowA><ArrowTri d="d" c="#2c5ea3" s={5} /></Slot>
              </Row>
              <Row $h={22}>
                <Slot $w={24}><GlyphBtn>Ж</GlyphBtn></Slot>
                <Slot $w={21}><ItalicGlyph>К</ItalicGlyph></Slot>
                <Slot $w={26}><Underlined>Ч</Underlined></Slot>
                <Slot $w={7}><Caret /></Slot>
                <Slot $w={12}><VRule $h={20} /></Slot>
                <Slot $w={22}><Borders /></Slot>
                <Slot $w={10}><Caret /></Slot>
                <Slot $w={12}><VRule $h={20} /></Slot>
                <Slot $w={22}><Fill /></Slot>
                <Slot $w={10}><Caret /></Slot>
                <Slot $w={22}><FontColor /></Slot>
                <Slot $w={10}><Caret /></Slot>
              </Row>
            </Col>
          </GroupBody>
          <GroupLabel>Шрифт</GroupLabel>
          <Launcher><Launch /></Launcher>
        </Group>

        <Group $w={167}>
          <GroupBody>
            <Col $pl={6} $pt={9} $gap={6} $w={126}>
              <Row $h={24}>
                <Slot $w={22}>{VA(1)}</Slot>
                <Slot $w={24}>{VA(5)}</Slot>
                <Slot $w={22}><Selected>{VA(8)}</Selected></Slot>
                <Slot $w={26}><Orient /></Slot>
                <Slot $w={6}><Caret /></Slot>
              </Row>
              <Row $h={22}>
                <Slot $w={22}><Lines rows={HL} /></Slot>
                <Slot $w={24}><Lines rows={HC} /></Slot>
                <Slot $w={22}><Lines rows={HR} /></Slot>
                <Slot $w={26}><Indent /></Slot>
                <Slot $w={22}><Indent flip /></Slot>
              </Row>
            </Col>
            <Slot $w={1}><VRule $h={52} /></Slot>
            <Col $pl={7} $pt={11} $gap={6}>
              <Row $h={22}><Wrap /></Row>
              <Row $h={22}><Merge /><Slot $w={12}><Caret /></Slot></Row>
            </Col>
          </GroupBody>
          <GroupLabel>Выравнивание</GroupLabel>
          <Launcher><Launch /></Launcher>
        </Group>

        <Group $w={143}>
          <GroupBody>
            <Col $pl={5} $pt={10} $gap={8}>
              <ComboBox $w={133}>Общий<Caret /></ComboBox>
              <Row $h={22}>
                <Slot $w={22}><Money /></Slot>
                <Slot $w={10}><Caret /></Slot>
                <Slot $w={26}><NumText>%</NumText></Slot>
                <Slot $w={22}><NumText>000</NumText></Slot>
                <Slot $w={8}><VRule $h={20} /></Slot>
                <Slot $w={22}><DecInc top=",0" bot=",00" /></Slot>
                <Slot $w={24}><DecInc top=",00" bot=",0" down /></Slot>
              </Row>
            </Col>
          </GroupBody>
          <GroupLabel>Число</GroupLabel>
          <Launcher><Launch /></Launcher>
        </Group>

        <Group $w={249}>
          <GroupBody>
            <BigBtn $w={118}><BigIcon><CondFormat /></BigIcon><BigText>Условное<br />форматирование<InlineCaret><Caret /></InlineCaret></BigText></BigBtn>
            <BigBtn $w={78}><BigIcon><TableFmt /></BigIcon><BigText>Форматировать<br />как таблицу<InlineCaret><Caret /></InlineCaret></BigText></BigBtn>
            <BigBtn $w={54}><BigIcon><TableFmt solid /></BigIcon><BigText>Стили<br />ячеек<InlineCaret><Caret /></InlineCaret></BigText></BigBtn>
          </GroupBody>
          <GroupLabel>Стили</GroupLabel>
        </Group>

        <Group $w={93}>
          <GroupBody>
            <Col $pl={8} $pt={1}>
              <SmallCmd><InsertRows /><CmdText>Вставить</CmdText><Caret /></SmallCmd>
              <SmallCmd><InsertRows red /><CmdText>Удалить</CmdText><Caret /></SmallCmd>
              <SmallCmd><FormatCells /><CmdText>Формат</CmdText><Caret /></SmallCmd>
            </Col>
          </GroupBody>
          <GroupLabel>Ячейки</GroupLabel>
        </Group>

        <Group $w={174}>
          <GroupBody>
            <Col $pl={7} $pt={2} $w={38}>
              <Row $h={22}><Slot $w={16}><Sigma /></Slot><Slot $w={12}><Caret /></Slot></Row>
              <Row $h={22}><Slot $w={16}><FillDown /></Slot><Slot $w={10}><Caret /></Slot></Row>
              <Row $h={22}><Slot $w={16}><Eraser /></Slot><Slot $w={10}><Caret /></Slot></Row>
            </Col>
            <BigBtn $w={68}><BigIcon><SortIcon /></BigIcon><BigText>Сортировка<br />и фильтр<InlineCaret><Caret /></InlineCaret></BigText></BigBtn>
            <BigBtn $w={60}><BigIcon><Binoculars /></BigIcon><BigText>Найти и<br />выделить<InlineCaret><Caret /></InlineCaret></BigText></BigBtn>
          </GroupBody>
          <GroupLabel>Редактирование</GroupLabel>
        </Group>
      </Ribbon>

      <FormulaRow>
        <NameBox><NameLabel>K29</NameLabel><Caret c="#333" /></NameBox>
        <FxPanel><FxDot /><FxText>fx</FxText></FxPanel>
        <FormulaInput />
        <FormulaDrop><svg width="9" height="6" viewBox="0 0 9 6"><path d="M1 1l3.500 3.500L8 1" fill="none" stroke="#666" strokeWidth="1.500" /></svg></FormulaDrop>
      </FormulaRow>
      <Gutter />

      <SheetWrap>
        <Sheet />
        <VScroll>
          <SplitV><svg width="9" height="2" viewBox="0 0 9 2"><path d="M0 1h9" stroke="#777" /></svg></SplitV>
          <Arrow $h={17}><ArrowTri d="u" c="#555" /></Arrow>
          <VThumb><Grip $v /></VThumb>
          <Flex1 />
          <Arrow $h={22}><ArrowTri d="d" c="#555" /></Arrow>
        </VScroll>
        <Flex1 />
      </SheetWrap>

      <TabsBar>
        <SheetTabs>
          <Slot $w={17}><First /></Slot>
          <Slot $w={14}><ArrowTri d="l" c="#5b5f66" /></Slot>
          <Slot $w={14}><ArrowTri d="r" c="#5b5f66" /></Slot>
          <Slot $w={14}><First flip /></Slot>
          <NavGap />
          <VRule $h={15} $c="#a9adb3" />
          <SheetTab $w={50} $on>Лист1</SheetTab>
          <Slash />
          <SheetTab $w={43}>Лист2</SheetTab>
          <Slash w={10} />
          <SheetTab $w={41}>Лист3</SheetTab>
          <Slash />
          <SheetTab $w={22}><NewSheet /></SheetTab>
          <Slash w={14} />
        </SheetTabs>
        <SplitH><HBar /></SplitH>
        <Slot $w={17}><ArrowTri d="l" c="#444" /></Slot>
        <HThumb><Grip /></HThumb>
        <Flex1 />
        <Slot $w={17}><ArrowTri d="r" c="#444" /></Slot>
        <SplitH><HBar /></SplitH>
        <Slot $w={20} />
      </TabsBar>

      <StatusBar>
        <Ready>Готово</Ready>
        <Flex1 />
        <ViewBtn $on><Normal /></ViewBtn>
        <ViewBtn><PageV /></ViewBtn>
        <ViewBtn><BreakV /></ViewBtn>
        <Zoom>120%</Zoom>
        <ZoomMinus><MinusBar /></ZoomMinus>
        <TipLine />
        <Tooltip>Свернуть все окна</Tooltip>
      </StatusBar>

      <Taskbar>
        <Orb><WinOrb /></Orb>
        <TaskBtn $w={59} $open><Folder /></TaskBtn>
        <TaskBtn $w={59}><Wmp /></TaskBtn>
        <TaskBtn $w={68}><Ie /></TaskBtn>
        <TaskBtn $w={58} $open><Yandex /></TaskBtn>
        <TaskBtn $w={66}><Remote /></TaskBtn>
        <TaskBtn $w={53} $open><Word /></TaskBtn>
        <TaskBtn $w={59} $ml={9} $open><ExcelBig /></TaskBtn>
        <Tray>
          <Lang>RU</Lang>
          <Slot $w={20}><ArrowTri d="u" c="#fff" /></Slot>
          <Slot $w={26}><TrayFlag /></Slot>
          <Slot $w={24}><TrayNet /></Slot>
          <Slot $w={22}><TraySpeaker /></Slot>
          <Clock>11:41<br />29.10.2013</Clock>
          <ShowDesk />
        </Tray>
      </Taskbar>
    </Screen>
  );
}
